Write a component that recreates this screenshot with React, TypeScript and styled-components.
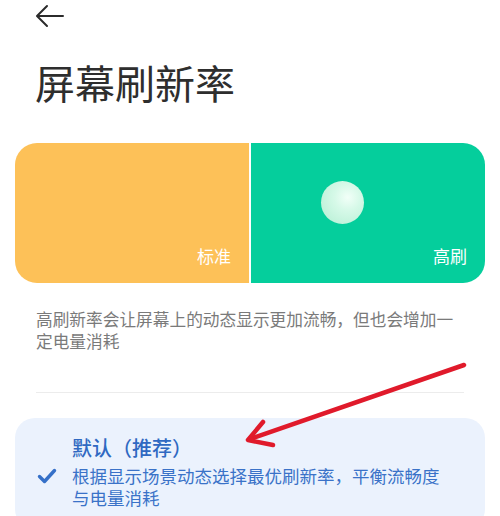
import styled, { createGlobalStyle } from "styled-components";

const GlobalStyle = createGlobalStyle`
  body {
    margin: 0;
    background: #ffffff;
    font-family: "Noto Sans CJK SC", "Noto Sans", sans-serif;
  }
`;

function BackArrow() {
  return (
    <svg width="30" height="24" viewBox="0 0 30 24" fill="none">
      <path
        d="M28 12H3M12 2L2 12L12 22"
        stroke="#2b2b2b"
        strokeWidth="2"
        strokeLinecap="round"
        strokeLinejoin="round"
      />
    </svg>
  );
}

function CheckIcon() {
  return (
    <svg width="20" height="16" viewBox="0 0 20 16" fill="none">
      <path
        d="M2.5 8.5L7.5 13.5L17.5 2.5"
        stroke="#3570c8"
        strokeWidth="3.4"
        strokeLinecap="round"
        strokeLinejoin="round"
      />
    </svg>
  );
}

function App() {
  const modes = [
    { label: "标准", color: "#fdc158", knob: false },
    { label: "高刷", color: "#05ce9c", knob: true },
  ];

  return (
    <Page>
      <GlobalStyle />
      <Header>
        <BackArrow />
      </Header>
      <Title>屏幕刷新率</Title>
      <Preview>
        {modes.map((item) => (
          <Half key={item.label} $color={item.color}>
            {item.knob && <Knob />}
            <HalfLabel>{item.label}</HalfLabel>
          </Half>
        ))}
      </Preview>
      <Description>
        高刷新率会让屏幕上的动态显示更加流畅，但也会增加一定电量消耗
      </Description>
      <Divider />
      <OptionCard>
        <CheckColumn>
          <CheckIcon />
        </CheckColumn>
        <OptionText>
          <OptionTitle>默认（推荐）</OptionTitle>
          <OptionDesc>
            根据显示场景动态选择最优刷新率，平衡流畅度与电量消耗
          </OptionDesc>
        </OptionText>
      </OptionCard>
      <Annotation width="500" height="516" viewBox="0 0 500 516">
        <path
          d="M464 365L250 439"
          stroke="#e01a2b"
          strokeWidth="4.5"
          strokeLinecap="round"
        />
        <path
          d="M263 422L248 440L273 445"
          stroke="#e01a2b"
          strokeWidth="4.5"
          strokeLinecap="round"
          strokeLinejoin="round"
          fill="none"
        />
      </Annotation>
    </Page>
  );
}

const Page = styled.div`
  position: relative;
  width: 500px;
  height: 516px;
  overflow: hidden;
  background: #ffffff;
`;

const Header = styled.div`
  display: flex;
  align-items: center;
  height: 32px;
  padding-left: 35px;
`;

const Title = styled.h1`
  margin: 26px 0 0 0;
  padding-left: 35px;
  font-size: 40px;
  line-height: 48px;
  font-weight: 400;
  color: #2e2e2e;
`;

const Preview = styled.div`
  display: flex;
  gap: 2px;
  height: 140px;
  margin: 37px 15px 0 15px;
  border-radius: 22px;
  overflow: hidden;
  background: #ffffff;
`;

const Half = styled.div<{ $color: string }>`
  flex: 1;
  display: flex;
  flex-direction: column;
  padding: 38px 18px 17px 18px;
  background: ${(p) => p.$color};
`;

const Knob = styled.div`
  width: 43px;
  height: 43px;
  margin-left: 52px;
  border-radius: 50%;
  background: radial-gradient(
    circle at 62% 38%,
    #f2fff8 0%,
    #d6f9e8 35%,
    #b2eed2 100%
  );
`;

const HalfLabel = styled.div`
  margin-top: auto;
  align-self: flex-end;
  font-size: 17px;
  line-height: 20px;
  color: #ffffff;
`;

const Description = styled.p`
  margin: 25px 0 0 0;
  padding: 0 36px;
  font-size: 16.7px;
  line-height: 22px;
  color: #7a7a7a;
`;

const Divider = styled.div`
  height: 1px;
  margin: 40px 36px 0 36px;
  background: #ececec;
`;

const OptionCard = styled.div`
  display: flex;
  margin: 25px 15px 0 15px;
  padding: 17px 35px 20px 22px;
  border-radius: 20px;
  background: #ebf2fd;
`;

const CheckColumn = styled.div`
  width: 35px;
  padding-top: 30px;
`;

const OptionText = styled.div`
  flex: 1;
  display: flex;
  flex-direction: column;
  gap: 4px;
`;

const OptionTitle = styled.div`
  font-size: 20px;
  line-height: 26px;
  font-weight: 500;
  color: #2f69c2;
`;

const OptionDesc = styled.div`
  font-size: 17.5px;
  line-height: 22px;
  color: #3a72c8;
`;

const Annotation = styled.svg`
  position: absolute;
  left: 0;
  top: 0;
  pointer-events: none;
`;

export default App;
